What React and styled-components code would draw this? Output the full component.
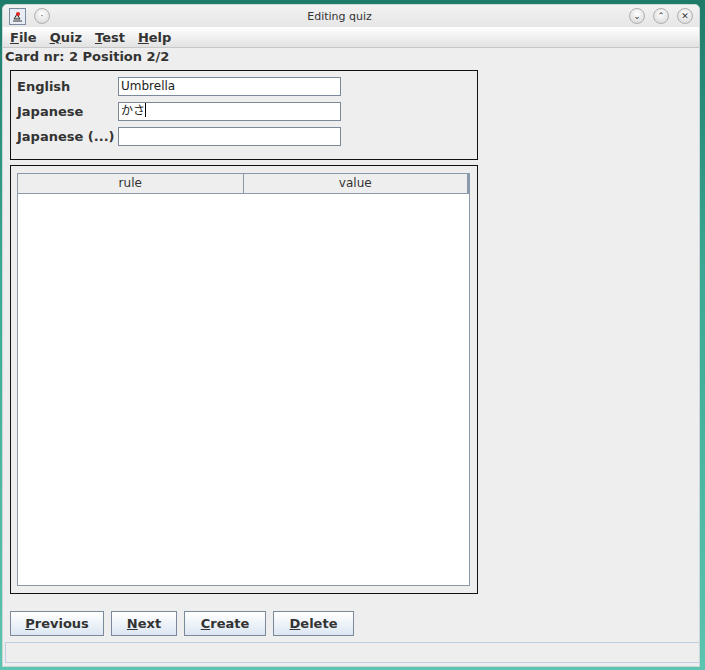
import React from 'react';
import styled, { createGlobalStyle } from 'styled-components';

const Global = createGlobalStyle`
  html, body { margin: 0; padding: 0; }
  body {
    width: 705px; height: 670px; overflow: hidden;
    background: linear-gradient(180deg, #1f7a6a 0%, #3aa894 40%, #5cc4b0 100%);
    font-family: "DejaVu Sans", sans-serif;
  }
`;

const Window = styled.div`
  position: relative;
  margin: 4px 5px 0 2px;
  height: 663px;
  background: #eeeeee;
  border-radius: 5px 5px 0 0;
  border: 1px solid #c8d8d4;
  box-sizing: border-box;
  display: flex;
  flex-direction: column;
`;

const TitleBar = styled.div`
  height: 22px;
  display: flex;
  align-items: center;
  padding: 0 6px;
  gap: 8px;
  background: linear-gradient(#f2f2f2, #e6e6e6);
  border-radius: 5px 5px 0 0;
`;

const Title = styled.div`
  flex: 1;
  text-align: center;
  font-size: 11px;
  color: #333;
`;

const RoundBtn = styled.div`
  width: 14px; height: 14px; border-radius: 50%;
  background: radial-gradient(circle at 50% 35%, #fff, #d4d4d4);
  border: 1px solid #b0b0b0;
  display: flex; align-items: center; justify-content: center;
  font-size: 9px; color: #333; line-height: 1;
`;

const AppIcon = styled.div`
  width: 15px; height: 15px;
  border: 1px solid #7a8aa0;
  background: #e8ecf4;
  display: flex; align-items: center; justify-content: center;
`;

const MenuBar = styled.div`
  height: 20px;
  display: flex;
  align-items: center;
  gap: 13px;
  padding: 0 7px;
  background: linear-gradient(#ffffff, #e2e2e2);
  border-bottom: 1px solid #c8c8c8;
`;

const MenuItem = styled.span`
  font-size: 13px; font-weight: bold; color: #333;
  u { text-decoration: underline; }
`;

const Status = styled.div`
  font-size: 13px; font-weight: bold; color: #333;
  padding: 1px 2px 0;
  height: 20px;
`;

const Panel = styled.div`
  margin: 0 221px 0 7px;
  border: 1px solid #111;
  padding: ${p => p.$pad};
`;

const Form = styled.div`
  display: grid;
  grid-template-columns: 101px 223px;
  row-gap: 6px;
  align-items: center;
`;

const Label = styled.span`
  font-size: 13px; font-weight: bold; color: #333;
`;

const Field = styled.div`
  height: 17px;
  border: 1px solid #7a8a9a;
  background: #fff;
  font-size: 12px;
  padding-left: 2px;
  line-height: 17px;
  color: #222;
  font-family: "DejaVu Sans", "Noto Sans CJK JP", sans-serif;
`;

const Caret = styled.span`
  display: inline-block; width: 1px; height: 14px; background: #000;
  vertical-align: -2px;
`;

const Table = styled.div`
  height: 411px;
  border: 1px solid #8a9aaa;
  background: #fff;
`;

const Header = styled.div`
  display: grid;
  grid-template-columns: 1fr 1fr;
  height: 19px;
  border-bottom: 1px solid #8a9aaa;
  background: #eeeeee;
`;

const HeadCell = styled.div`
  font-size: 12px; color: #333;
  text-align: center; line-height: 19px;
  border-right: 1px solid #8a9aaa;
  &:last-child { border-right: 2px solid #8a9aaa; }
`;

const Buttons = styled.div`
  display: flex; gap: 7px;
  margin: 17px 0 0 7px;
`;

const Button = styled.button`
  width: ${p => p.$w}px;
  height: 25px;
  border: 1px solid #7a8a9a;
  background: linear-gradient(#ffffff, #dce6f2);
  font-family: "DejaVu Sans", sans-serif;
  font-size: 13px; font-weight: bold; color: #333;
  padding: 0;
`;

const StatusBar = styled.div`
  margin: 6px 0 0 2px;
  height: 19px;
  border: 1px solid #c0d0e4;
  border-right: none;
`;

const mnemonic = (t) => <><u>{t[0]}</u>{t.slice(1)}</>;

export default function App() {
  return (
    <>
      <Global />
      <Window>
        <TitleBar>
          <AppIcon>
            <svg width="13" height="13" viewBox="0 0 13 13">
              <path d="M2 11h9M3 9l3-5 3 5z" stroke="#333" fill="#ccc" strokeWidth="1" />
              <circle cx="7" cy="4" r="2" fill="#d22" />
            </svg>
          </AppIcon>
          <RoundBtn>·</RoundBtn>
          <Title>Editing quiz</Title>
          <RoundBtn>⌄</RoundBtn>
          <RoundBtn>⌃</RoundBtn>
          <RoundBtn>✕</RoundBtn>
        </TitleBar>
        <MenuBar>
          {['File', 'Quiz', 'Test', 'Help'].map(m => <MenuItem key={m}>{mnemonic(m)}</MenuItem>)}
        </MenuBar>
        <Status>Card nr: 2 Position 2/2</Status>
        <Panel $pad="6px 6px 13px 6px" style={{ marginTop: 1 }}>
          <Form>
            <Label>English</Label><Field>Umbrella</Field>
            <Label>Japanese</Label><Field>かさ<Caret /></Field>
            <Label>Japanese (...)</Label><Field />
          </Form>
        </Panel>
        <Panel $pad="7px 7px 7px 6px" style={{ marginTop: 5 }}>
          <Table>
            <Header>
              <HeadCell>rule</HeadCell>
              <HeadCell>value</HeadCell>
            </Header>
          </Table>
        </Panel>
        <Buttons>
          <Button $w={94}>{mnemonic('Previous')}</Button>
          <Button $w={66}>{mnemonic('Next')}</Button>
          <Button $w={82}>{mnemonic('Create')}</Button>
          <Button $w={81}>{mnemonic('Delete')}</Button>
        </Buttons>
        <StatusBar />
      </Window>
    </>
  );
}
